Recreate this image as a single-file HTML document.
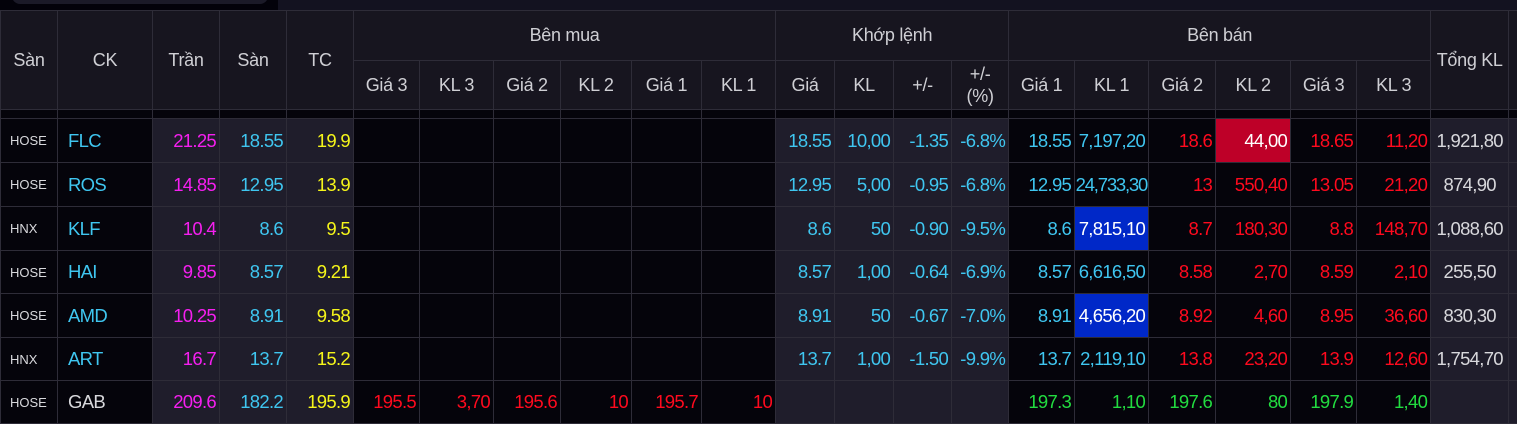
<!DOCTYPE html>
<html><head><meta charset="utf-8"><style>
*{margin:0;padding:0;box-sizing:border-box}
body{width:1517px;height:421px;overflow:hidden;background:#131220;font-family:"Liberation Sans",sans-serif;position:relative}
.top{position:absolute;left:0;top:0;width:278px;height:10px;background:#03020a}
.pill{position:absolute;left:12px;top:-12px;width:256px;height:16px;border-radius:10px;background:#1b1a28}
table{position:absolute;left:0;top:10px;border-collapse:collapse;table-layout:fixed;width:1517px}
td,th{border:1px solid #2e2c38;overflow:hidden;white-space:nowrap}
th{background:#17151f;color:#cfcfd4;font-weight:normal;font-size:18px;text-align:center;letter-spacing:-0.3px}
td{background:#05040b;font-size:18.5px;text-align:right;padding-right:3px;letter-spacing:-0.7px}
tr.sp td{background:#05040b;padding:0}
td.s{background:#1f1d2b}
.ex{font-size:13px;color:#d8d8dc;text-align:left;padding-left:9px;letter-spacing:0}
.ck{text-align:left;padding-left:10px}
.c{color:#3fc6f0}.m{color:#f51ff0}.y{color:#f5f51a}.r{color:#ff0a1e}.g{color:#22dc40}.w{color:#d8d8dc}
.tk{text-align:center;color:#d8d8dc;padding:0}
.bb{background:#0028c8!important;color:#fff}
.rb{background:#be0028!important;color:#fff}
</style></head><body>
<div class="top"><div class="pill"></div></div>
<table>
<colgroup>
<col style="width:57px"><col style="width:95px"><col style="width:67px"><col style="width:67px"><col style="width:67px">
<col style="width:66px"><col style="width:74px"><col style="width:67px"><col style="width:71px"><col style="width:70px"><col style="width:74px">
<col style="width:59px"><col style="width:59px"><col style="width:58px"><col style="width:57px">
<col style="width:66px"><col style="width:74px"><col style="width:67px"><col style="width:75px"><col style="width:66px"><col style="width:74px">
<col style="width:78px"><col style="width:9px">
</colgroup>
<tr style="height:50px"><th rowspan="2">Sàn</th><th rowspan="2">CK</th><th rowspan="2">Trần</th><th rowspan="2">Sàn</th><th rowspan="2">TC</th><th colspan="6">Bên mua</th><th colspan="4">Khớp lệnh</th><th colspan="6">Bên bán</th><th rowspan="2">Tổng KL</th><th rowspan="2"></th></tr>
<tr style="height:49px"><th>Giá 3</th><th>KL 3</th><th>Giá 2</th><th>KL 2</th><th>Giá 1</th><th>KL 1</th><th>Giá</th><th>KL</th><th>+/-</th><th style="line-height:22px">+/-<br>(%)</th><th>Giá 1</th><th>KL 1</th><th>Giá 2</th><th>KL 2</th><th>Giá 3</th><th>KL 3</th></tr>
<tr class="sp" style="height:9px"><td></td><td></td><td class="s"></td><td class="s"></td><td class="s"></td><td></td><td></td><td></td><td></td><td></td><td></td><td class="s"></td><td class="s"></td><td class="s"></td><td class="s"></td><td></td><td></td><td></td><td></td><td></td><td></td><td class="s"></td><td class="s"></td></tr>
<tr style="height:44px"><td class="ex">HOSE</td><td class="ck c">FLC</td><td class="s m">21.25</td><td class="s c">18.55</td><td class="s y">19.9</td><td></td><td></td><td></td><td></td><td></td><td></td><td class="s c">18.55</td><td class="s c">10,00</td><td class="s c">-1.35</td><td class="s c">-6.8%</td><td class="c">18.55</td><td class="c">7,197,20</td><td class="r">18.6</td><td class="rb">44,00</td><td class="r">18.65</td><td class="r">11,20</td><td class="s tk">1,921,80</td><td class="s"></td></tr>
<tr style="height:44px"><td class="ex">HOSE</td><td class="ck c">ROS</td><td class="s m">14.85</td><td class="s c">12.95</td><td class="s y">13.9</td><td></td><td></td><td></td><td></td><td></td><td></td><td class="s c">12.95</td><td class="s c">5,00</td><td class="s c">-0.95</td><td class="s c">-6.8%</td><td class="c">12.95</td><td class="c" style="letter-spacing:-1.2px;padding-right:1px">24,733,30</td><td class="r">13</td><td class="r">550,40</td><td class="r">13.05</td><td class="r">21,20</td><td class="s tk">874,90</td><td class="s"></td></tr>
<tr style="height:44px"><td class="ex">HNX</td><td class="ck c">KLF</td><td class="s m">10.4</td><td class="s c">8.6</td><td class="s y">9.5</td><td></td><td></td><td></td><td></td><td></td><td></td><td class="s c">8.6</td><td class="s c">50</td><td class="s c">-0.90</td><td class="s c">-9.5%</td><td class="c">8.6</td><td class="bb">7,815,10</td><td class="r">8.7</td><td class="r">180,30</td><td class="r">8.8</td><td class="r">148,70</td><td class="s tk">1,088,60</td><td class="s"></td></tr>
<tr style="height:43px"><td class="ex">HOSE</td><td class="ck c">HAI</td><td class="s m">9.85</td><td class="s c">8.57</td><td class="s y">9.21</td><td></td><td></td><td></td><td></td><td></td><td></td><td class="s c">8.57</td><td class="s c">1,00</td><td class="s c">-0.64</td><td class="s c">-6.9%</td><td class="c">8.57</td><td class="c">6,616,50</td><td class="r">8.58</td><td class="r">2,70</td><td class="r">8.59</td><td class="r">2,10</td><td class="s tk">255,50</td><td class="s"></td></tr>
<tr style="height:44px"><td class="ex">HOSE</td><td class="ck c">AMD</td><td class="s m">10.25</td><td class="s c">8.91</td><td class="s y">9.58</td><td></td><td></td><td></td><td></td><td></td><td></td><td class="s c">8.91</td><td class="s c">50</td><td class="s c">-0.67</td><td class="s c">-7.0%</td><td class="c">8.91</td><td class="bb">4,656,20</td><td class="r">8.92</td><td class="r">4,60</td><td class="r">8.95</td><td class="r">36,60</td><td class="s tk">830,30</td><td class="s"></td></tr>
<tr style="height:43px"><td class="ex">HNX</td><td class="ck c">ART</td><td class="s m">16.7</td><td class="s c">13.7</td><td class="s y">15.2</td><td></td><td></td><td></td><td></td><td></td><td></td><td class="s c">13.7</td><td class="s c">1,00</td><td class="s c">-1.50</td><td class="s c">-9.9%</td><td class="c">13.7</td><td class="c">2,119,10</td><td class="r">13.8</td><td class="r">23,20</td><td class="r">13.9</td><td class="r">12,60</td><td class="s tk">1,754,70</td><td class="s"></td></tr>
<tr style="height:43px"><td class="ex">HOSE</td><td class="ck w">GAB</td><td class="s m">209.6</td><td class="s c">182.2</td><td class="s y">195.9</td><td class="r">195.5</td><td class="r">3,70</td><td class="r">195.6</td><td class="r">10</td><td class="r">195.7</td><td class="r">10</td><td class="s"></td><td class="s"></td><td class="s"></td><td class="s"></td><td class="g">197.3</td><td class="g">1,10</td><td class="g">197.6</td><td class="g">80</td><td class="g">197.9</td><td class="g">1,40</td><td class="s tk"></td><td class="s"></td></tr>
</table>
</body></html>
